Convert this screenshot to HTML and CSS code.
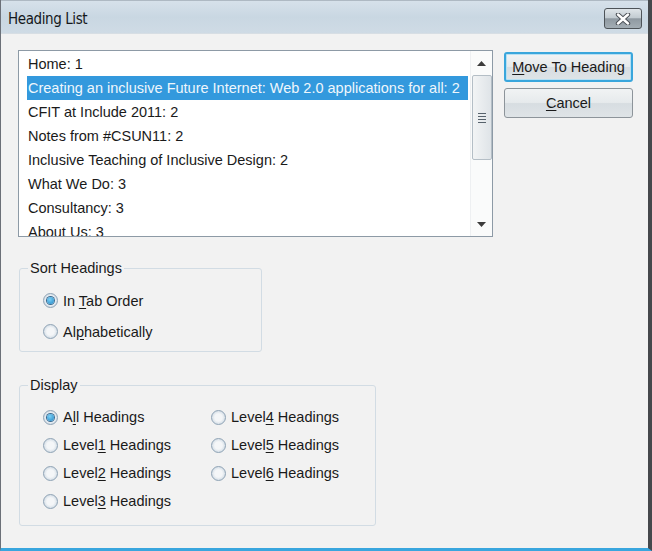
FILE: index.html
```html
<!DOCTYPE html>
<html>
<head>
<meta charset="utf-8">
<link rel="stylesheet" href="styles.css">
</head>
<body>
<div class="window">
  <div class="titlebar">
    <span class="title">Heading List</span>
    <button class="close" aria-label="Close">
      <svg width="16" height="12" viewBox="0 0 16 12"><path d="M3 1.5 L13 10.5 M13 1.5 L3 10.5" stroke="#4a4f55" stroke-width="4.4" stroke-linecap="round"/><path d="M3 1.5 L13 10.5 M13 1.5 L3 10.5" stroke="#ffffff" stroke-width="2.4" stroke-linecap="round"/></svg>
    </button>
  </div>
  <div class="client">
    <div class="toprow">
      <div class="listbox">
        <ul class="items">
          <li>Home: 1</li>
          <li class="sel">Creating an inclusive Future Internet: Web 2.0 applications for all: 2</li>
          <li>CFIT at Include 2011: 2</li>
          <li>Notes from #CSUN11: 2</li>
          <li>Inclusive Teaching of Inclusive Design: 2</li>
          <li>What We Do: 3</li>
          <li>Consultancy: 3</li>
          <li>About Us: 3</li>
        </ul>
        <div class="scrollbar">
          <div class="arrow up"><svg width="9" height="5" viewBox="0 0 9 5"><path d="M0 5 L4.5 0 L9 5 Z" fill="#3c3c3c"/></svg></div>
          <div class="thumb"><span class="grip"></span><span class="grip"></span><span class="grip"></span><span class="grip"></span></div>
          <div class="track"></div>
          <div class="arrow down"><svg width="9" height="5" viewBox="0 0 9 5"><path d="M0 0 L9 0 L4.5 5 Z" fill="#3c3c3c"/></svg></div>
        </div>
      </div>
      <div class="buttons">
        <button class="btn default"><u>M</u>ove To Heading</button>
        <button class="btn"><u>C</u>ancel</button>
      </div>
    </div>

    <fieldset class="group sort">
      <legend>Sort Headings</legend>
      <div class="opts">
        <label class="opt"><span class="radio checked"></span><span>In <u>T</u>ab Order</span></label>
        <label class="opt"><span class="radio"></span><span>Al<u>p</u>habetically</span></label>
      </div>
    </fieldset>

    <fieldset class="group display">
      <legend>Display</legend>
      <div class="grid">
        <label class="opt"><span class="radio checked"></span><span>A<u>l</u>l Headings</span></label>
        <label class="opt"><span class="radio"></span><span>Level<u>1</u> Headings</span></label>
        <label class="opt"><span class="radio"></span><span>Level<u>2</u> Headings</span></label>
        <label class="opt"><span class="radio"></span><span>Level<u>3</u> Headings</span></label>
        <label class="opt"><span class="radio"></span><span>Level<u>4</u> Headings</span></label>
        <label class="opt"><span class="radio"></span><span>Level<u>5</u> Headings</span></label>
        <label class="opt"><span class="radio"></span><span>Level<u>6</u> Headings</span></label>
      </div>
    </fieldset>
  </div>
</div>
</body>
</html>
```

FILE: styles.css
```css
* { box-sizing: border-box; }
html, body { margin: 0; padding: 0; }
body {
  width: 652px;
  height: 551px;
  overflow: hidden;
  font-family: "Liberation Sans", Arial, sans-serif;
  font-size: 14.5px;
  color: #1a1a1a;
  background: #f2f2f2;
}
.window {
  width: 652px;
  height: 551px;
  display: flex;
  flex-direction: column;
  border-left: 1px solid #6b7078;
  border-right: 4px solid #45484c;
  border-bottom: 3px solid #39a6de;
  background: #f2f2f2;
}
.titlebar {
  height: 34px;
  flex: none;
  display: flex;
  align-items: flex-start;
  justify-content: space-between;
  padding: 0 6px 0 7px;
  background: linear-gradient(#d6e1ea, #c9d7e2 50%, #cfdbe5);
  border-top: 1px solid #aeb9c3;
  border-bottom: 1px solid #d7dee4;
}
.title {
  font-family: "DejaVu Sans Condensed", "Noto Sans", sans-serif;
  font-size: 15px;
  color: #15181b;
  margin-top: 9px;
  letter-spacing: -0.4px;
}
.close {
  margin-top: 7px;
  width: 38px;
  height: 21px;
  padding: 0;
  display: flex;
  align-items: center;
  justify-content: center;
  border: 1px solid #4d5358;
  border-radius: 3px;
  background: linear-gradient(#dfe5e9, #c3ccd2 45%, #8f99a1 52%, #a3adb4);
}
.client {
  flex: 1;
  padding: 16px 0 0 17px;
}
.toprow {
  display: flex;
  align-items: flex-start;
}
.listbox {
  width: 475px;
  height: 187px;
  border: 1px solid #8d9aa6;
  background: #fff;
  display: flex;
  overflow: hidden;
}
.items {
  list-style: none;
  margin: 0;
  padding: 1px 2px 0 8px;
  flex: 1;
  overflow: hidden;
}
.items li {
  height: 24px;
  line-height: 24px;
  padding-left: 1px;
  white-space: nowrap;
}
.items li.sel {
  background: #3399dd;
  color: #eef6fc;
}
.scrollbar {
  width: 22px;
  flex: none;
  display: flex;
  flex-direction: column;
  align-items: center;
  border-left: 1px solid #eef0f2;
  background: #fafbfb;
}
.arrow {
  height: 24px;
  width: 100%;
  display: flex;
  align-items: center;
  justify-content: center;
  flex: none;
}
.thumb {
  width: 20px;
  height: 85px;
  flex: none;
  border: 1px solid #b4bec6;
  border-radius: 2px;
  background: linear-gradient(90deg, #f2f4f5, #dfe4e8);
  display: flex;
  flex-direction: column;
  align-items: center;
  justify-content: center;
  gap: 2px;
}
.grip {
  width: 8px;
  height: 1px;
  background: #56626c;
}
.track { flex: 1; }
.buttons {
  margin-left: 11px;
  margin-top: 2px;
  display: flex;
  flex-direction: column;
  gap: 6px;
}
.btn {
  width: 129px;
  height: 30px;
  font-family: "Liberation Sans", Arial, sans-serif;
  font-size: 14.5px;
  color: #1a1a1a;
  border: 1px solid #8d949a;
  border-radius: 3px;
  background: linear-gradient(#f1f3f4, #e6eaec 48%, #d7dde1 52%, #dfe4e7);
  padding: 0;
}
.btn.default {
  border: 2px solid #3aa6dc;
  box-shadow: inset 0 0 0 1px #b7e0f3;
}
.group {
  margin: 0;
  border: 1px solid #d2dce4;
  border-radius: 3px;
  padding: 0;
}
.group legend {
  padding: 0 2px;
  margin-left: 8px;
  font-size: 14.5px;
  line-height: 16px;
}
.sort {
  margin-top: 23px;
  margin-left: 1px;
  width: 243px;
  height: 92px;
}
.opts {
  padding: 9px 0 0 23px;
  display: flex;
  flex-direction: column;
}
.opt {
  display: flex;
  align-items: center;
  white-space: nowrap;
}
.sort .opt { height: 31px; }
.radio {
  width: 15px;
  height: 15px;
  border-radius: 50%;
  border: 1px solid #8fa3b5;
  background: radial-gradient(circle at 50% 50%, #f4f6f8 0 40%, #d3dde6 75%);
  margin-right: 5px;
  flex: none;
  display: flex;
  align-items: center;
  justify-content: center;
}
.radio.checked::after {
  content: "";
  width: 7px;
  height: 7px;
  border-radius: 50%;
  background: radial-gradient(circle at 40% 35%, #7dd0f5, #1f86c6);
  box-shadow: 0 0 0 1px #3a6a8f;
}
.display {
  margin-top: 25px;
  margin-left: 1px;
  width: 357px;
  height: 149px;
}
.grid {
  padding: 10px 0 0 23px;
  display: grid;
  grid-auto-flow: column;
  grid-template-columns: 168px auto;
  grid-template-rows: repeat(4, 28px);
}
u { text-decoration: underline; text-underline-offset: 2px; }
```
